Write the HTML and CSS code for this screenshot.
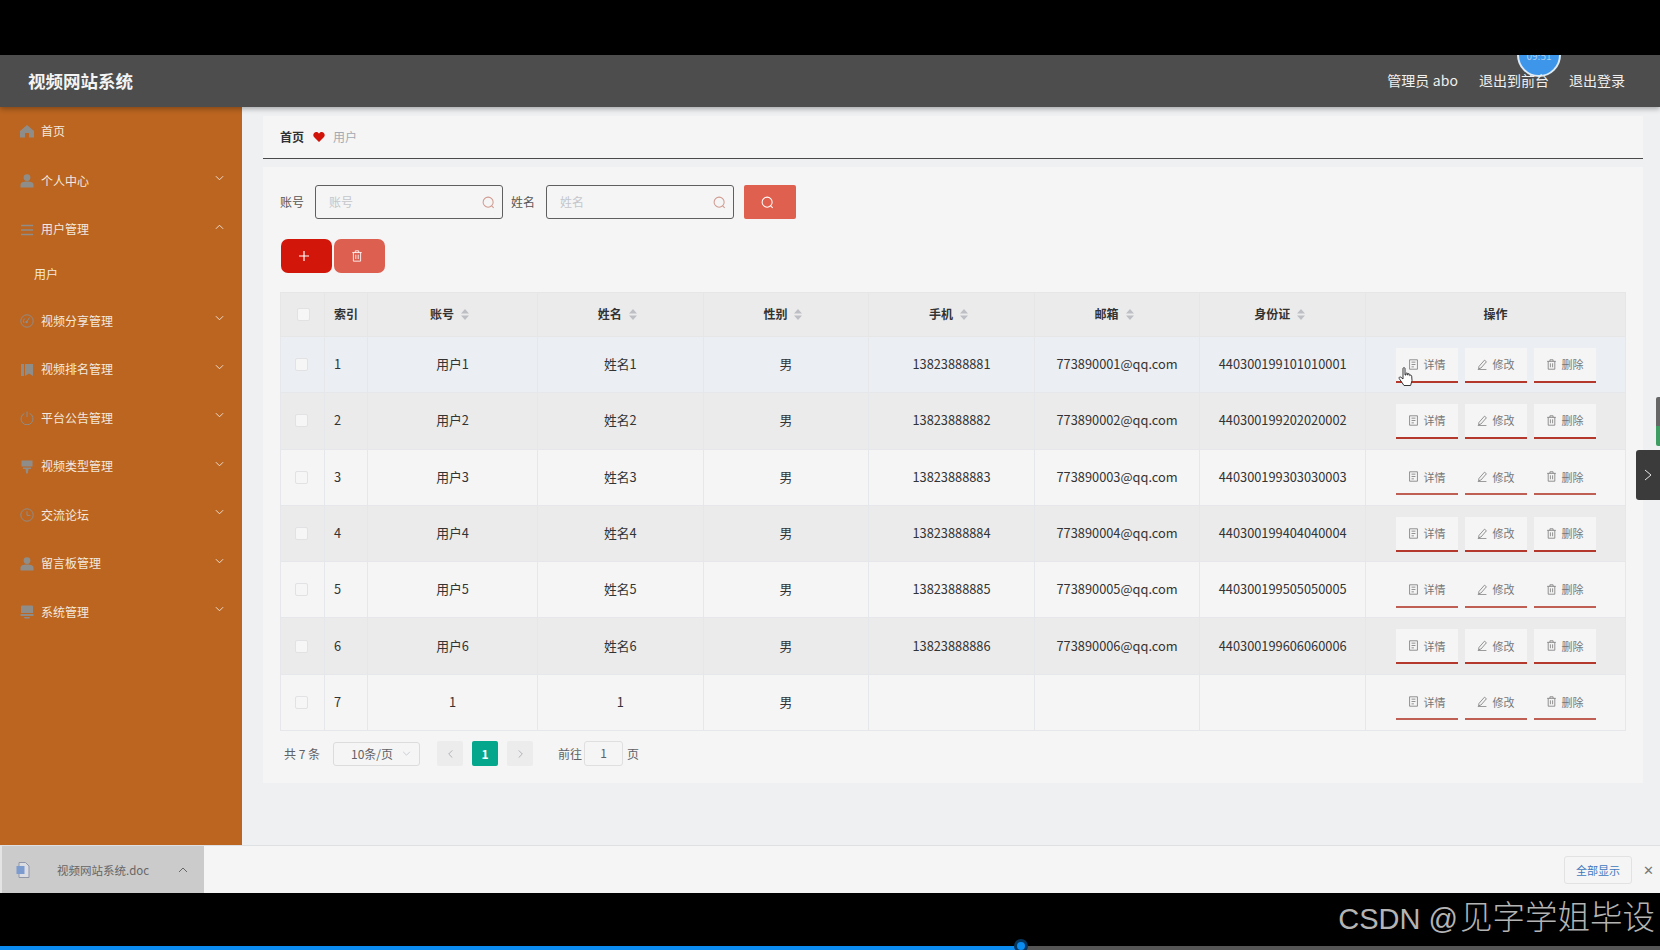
FILE: index.html
```html
<!DOCTYPE html>
<html lang="zh-CN">
<head>
  <meta charset="UTF-8" />
  <title>视频网站系统</title>
  <link rel="stylesheet" href="styles.css">
</head>
<body>
  <svg class="defs" width="0" height="0">
    <defs>
      <symbol id="i-home" viewBox="0 0 14 14"><path d="M7 1 L14 7 V13.5 H9 V9 H5 V13.5 H0 V7 Z" fill="currentColor"/></symbol>
      <symbol id="i-user" viewBox="0 0 14 14"><circle cx="7" cy="3.6" r="3.4" fill="currentColor"/><path d="M0.5 13.5 V11 C0.5 8.6 3 7.6 7 7.6 C11 7.6 13.5 8.6 13.5 11 V13.5 Z" fill="currentColor"/></symbol>
      <symbol id="i-list" viewBox="0 0 14 14"><path d="M1 2.5 H13 M1 7 H13 M1 11.5 H13" stroke="currentColor" stroke-width="1.6" fill="none"/></symbol>
      <symbol id="i-gauge" viewBox="0 0 14 14"><circle cx="7" cy="7" r="6.2" stroke="currentColor" fill="none"/><path d="M9.5 3.5 L7 7.5 M4 9 A3.4 3.4 0 0 1 4.6 4.6" stroke="currentColor" fill="none"/><circle cx="6.6" cy="8" r="1.2" fill="currentColor"/></symbol>
      <symbol id="i-book" viewBox="0 0 14 14"><path d="M1 1 H4 V13 H1 Z M5 1 H13 V13 L9 10.5 L5 13 Z" fill="currentColor"/></symbol>
      <symbol id="i-power" viewBox="0 0 14 14"><path d="M4.4 2.4 A6 6 0 1 0 9.6 2.4 M7 0.5 V6" stroke="currentColor" fill="none"/></symbol>
      <symbol id="i-brush" viewBox="0 0 14 14"><path d="M1.5 0.5 H12.5 V6.5 H1.5 Z M3 7.5 H11 V9 H8.5 L7.8 13.5 H6.2 L5.5 9 H3 Z" fill="currentColor"/></symbol>
      <symbol id="i-clock" viewBox="0 0 14 14"><circle cx="7" cy="7" r="6.2" stroke="currentColor" fill="none"/><path d="M7 3.4 V7.4 H10.4" stroke="currentColor" fill="none"/></symbol>
      <symbol id="i-system" viewBox="0 0 14 14"><path d="M2 0.5 H12 Q13 0.5 13 1.5 V8 H1 V1.5 Q1 0.5 2 0.5 Z M0.5 9 H13.5 V10.5 Q13.5 11 13 11 H1 Q0.5 11 0.5 10.5 Z M4 12 H10 L9.4 13.5 H4.6 Z" fill="currentColor"/></symbol>
      <symbol id="i-down" viewBox="0 0 10 6"><path d="M1 1 L5 5 L9 1" stroke="currentColor" fill="none"/></symbol>
      <symbol id="i-up" viewBox="0 0 10 6"><path d="M1 5 L5 1 L9 5" stroke="currentColor" fill="none"/></symbol>
      <symbol id="i-search" viewBox="0 0 14 14"><circle cx="6.6" cy="6.6" r="5.4" stroke="currentColor" fill="none" stroke-width="1.1"/><path d="M10.4 10.6 L12.6 12.8" stroke="currentColor" stroke-width="1.1"/></symbol>
      <symbol id="i-trash" viewBox="0 0 14 14"><path d="M1.5 3 H12.5 M5 3 V1 H9 V3 M2.8 3 V13 H11.2 V3 M5.6 5.5 V10.5 M8.4 5.5 V10.5" stroke="currentColor" fill="none"/></symbol>
      <symbol id="i-doc" viewBox="0 0 14 14"><path d="M2 1 H12 V13 H2 Z M4.5 4 H9.5 M4.5 7 H9.5 M4.5 10 H7.5" stroke="currentColor" fill="none"/></symbol>
      <symbol id="i-edit" viewBox="0 0 14 14"><path d="M9.5 1.5 L12 3.5 L5 11.5 L2 12.5 L2.5 9.5 Z M1 13.5 H12" stroke="currentColor" fill="none"/></symbol>
      <symbol id="i-sort" viewBox="0 0 8 11"><path d="M4 0 L8 4.5 H0 Z M4 11 L0 6.5 H8 Z" fill="currentColor"/></symbol>
    </defs>
  </svg>

  <div class="screen">
    <div class="black-top"></div>
    <header class="topbar">
      <div class="brand">视频网站系统</div>
      <div class="top-links">
        <span class="who">管理员 abo</span>
        <span>退出到前台</span>
        <span>退出登录</span>
      </div>
    </header>

    <div class="layout">
      <aside class="sidebar" id="sidebar"></aside>
      <main class="main">
        <div class="crumbs">
          <span class="crumb-home">首页</span>
          <svg class="heart" viewBox="0 0 14 12"><path d="M7 12 L1 6 C-1 3.5 0.8 0 3.8 0 C5.2 0 6.4 0.8 7 2 C7.6 0.8 8.8 0 10.2 0 C13.2 0 15 3.5 13 6 Z" fill="#d0140a"/></svg>
          <span class="crumb-now">用户</span>
        </div>

        <section class="panel">
          <div class="search-row">
            <label>账号</label>
            <div class="field"><span>账号</span><svg><use href="#i-search"/></svg></div>
            <label>姓名</label>
            <div class="field"><span>姓名</span><svg><use href="#i-search"/></svg></div>
            <button class="btn-search"><svg><use href="#i-search"/></svg></button>
          </div>

          <div class="tool-row">
            <button class="btn-add"><svg viewBox="0 0 12 12"><path d="M6 1 V11 M1 6 H11" stroke="#fff" stroke-width="1.2"/></svg></button>
            <button class="btn-del"><svg><use href="#i-trash"/></svg></button>
          </div>

          <table class="grid">
            <colgroup>
              <col class="c-check"><col class="c-index"><col class="c-account"><col class="c-text"><col class="c-text"><col class="c-text"><col class="c-text"><col class="c-text"><col class="c-action">
            </colgroup>
            <thead>
              <tr>
                <th class="cell-check"><span class="check head-check"></span></th>
                <th class="left">索引</th>
                <th>账号<svg class="sort"><use href="#i-sort"/></svg></th>
                <th>姓名<svg class="sort"><use href="#i-sort"/></svg></th>
                <th>性别<svg class="sort"><use href="#i-sort"/></svg></th>
                <th>手机<svg class="sort"><use href="#i-sort"/></svg></th>
                <th>邮箱<svg class="sort"><use href="#i-sort"/></svg></th>
                <th>身份证<svg class="sort"><use href="#i-sort"/></svg></th>
                <th>操作</th>
              </tr>
            </thead>
            <tbody id="rows"></tbody>
          </table>

          <div class="pager">
            <span class="total">共 7 条</span>
            <div class="size"><span>10条/页</span><svg><use href="#i-down"/></svg></div>
            <span class="page-btn prev"><svg><use href="#i-down"/></svg></span>
            <span class="page-btn current">1</span>
            <span class="page-btn next"><svg><use href="#i-down"/></svg></span>
            <span class="goto">前往</span>
            <span class="goto-input">1</span>
            <span class="goto-end">页</span>
          </div>
        </section>
      </main>
    </div>

    <div class="download-bar">
      <div class="download-tab">
        <svg class="doc-icon" viewBox="0 0 14 16"><path d="M3 0.5 H9.5 L13 4 V15.5 H3 Z" fill="#dcdde3" stroke="#8f97a8"/><rect x="0.5" y="4" width="8" height="8" fill="#7c9ccf"/></svg>
        <span class="doc-name">视频网站系统.doc</span>
        <svg class="doc-caret"><use href="#i-up"/></svg>
      </div>
      <div class="show-all">全部显示</div>
      <div class="close-bar">✕</div>
    </div>

    <div class="black-bottom">
      <div class="watermark"><span class="wm-latin">CSDN @</span>见字学姐毕设</div>
      <div class="progress"><div class="progress-done"></div><span class="progress-dot"></span></div>
    </div>

    <!-- things lying over the page -->
    <div class="clock-ball"><span>09:51</span></div>
    <div class="side-tab"><svg viewBox="0 0 8 12"><path d="M1 1 L7 6 L1 11" stroke="#e6e6e6" fill="none"/></svg></div>
    <div class="side-strip"></div>
    <svg class="cursor" viewBox="0 0 16 20"><path d="M5 1.5 C5 0.4 7 0.4 7 1.5 V8 L8 8 V6.6 C8 5.8 9.6 5.8 9.8 6.8 V8.2 V7.2 C9.9 6.4 11.6 6.5 11.7 7.6 V8.6 C12 7.9 13.6 8 13.7 9.2 L14 13.5 L12.6 18.5 H6 L1.2 11.5 C0.5 10.4 2 9.4 3 10.3 L5 12 Z" fill="#fff" stroke="#222" stroke-width="0.9"/></svg>
  </div>

  <script>
    const menu = [
      { name: '首页', icon: 'i-home', first: true, noArrow: true },
      { name: '个人中心', icon: 'i-user' },
      { name: '用户管理', icon: 'i-list', open: true },
      { name: '用户', sub: true },
      { name: '视频分享管理', icon: 'i-gauge' },
      { name: '视频排名管理', icon: 'i-book' },
      { name: '平台公告管理', icon: 'i-power' },
      { name: '视频类型管理', icon: 'i-brush' },
      { name: '交流论坛', icon: 'i-clock' },
      { name: '留言板管理', icon: 'i-user' },
      { name: '系统管理', icon: 'i-system' },
    ];

    const users = [
      { no: 1, account: '用户1', name: '姓名1', phone: '13823888881', mail: '773890001@qq.com', card: '440300199101010001' },
      { no: 2, account: '用户2', name: '姓名2', phone: '13823888882', mail: '773890002@qq.com', card: '440300199202020002' },
      { no: 3, account: '用户3', name: '姓名3', phone: '13823888883', mail: '773890003@qq.com', card: '440300199303030003' },
      { no: 4, account: '用户4', name: '姓名4', phone: '13823888884', mail: '773890004@qq.com', card: '440300199404040004' },
      { no: 5, account: '用户5', name: '姓名5', phone: '13823888885', mail: '773890005@qq.com', card: '440300199505050005' },
      { no: 6, account: '用户6', name: '姓名6', phone: '13823888886', mail: '773890006@qq.com', card: '440300199606060006' },
      { no: 7, account: '1', name: '1', phone: '', mail: '', card: '' },
    ];

    function renderMenu() {
      const box = document.getElementById('sidebar');
      for (const m of menu) {
        const div = document.createElement('div');
        div.className = m.sub ? 'menu-sub' : 'menu-item';
        if (m.first) div.classList.add('menu-first');
        if (m.sub) {
          div.textContent = m.name;
        } else {
          const arrow = m.noArrow ? '' : `<svg class="arrow"><use href="#${m.open ? 'i-up' : 'i-down'}"/></svg>`;
          div.innerHTML = `<svg class="menu-icon"><use href="#${m.icon}"/></svg><span>${m.name}</span>${arrow}`;
        }
        box.appendChild(div);
      }
    }

    function renderRows() {
      const body = document.getElementById('rows');
      for (const u of users) {
        const tr = document.createElement('tr');
        if (u.no === 1) tr.className = 'hover';
        tr.innerHTML = `
          <td class="cell-check"><span class="check"></span></td>
          <td class="left">${u.no}</td>
          <td>${u.account}</td>
          <td>${u.name}</td>
          <td>男</td>
          <td>${u.phone}</td>
          <td>${u.mail}</td>
          <td>${u.card}</td>
          <td class="actions">
            <span class="act"><svg><use href="#i-doc"/></svg>详情</span>
            <span class="act"><svg><use href="#i-edit"/></svg>修改</span>
            <span class="act"><svg><use href="#i-trash"/></svg>删除</span>
          </td>
        `;
        body.appendChild(tr);
      }
    }

    window.onload = () => {
      renderMenu();
      renderRows();
    };
  </script>
</body>
</html>
```

FILE: styles.css
```css
* {
  box-sizing: border-box;
}
body {
  margin: 0;
  background: #000;
  font-family: "Noto Sans CJK SC", "Liberation Sans", sans-serif;
  font-size: 12px;
  color: #333;
  overflow: hidden;
}
.defs {
  position: absolute;
}
.screen {
  position: relative;
  width: 1660px;
  height: 950px;
  overflow: hidden;
  display: flex;
  flex-direction: column;
}
.black-top {
  height: 55px;
  background: #000;
}

/* top bar */
.topbar {
  height: 52px;
  background: #4d4d4d;
  color: #f0f0f0;
  display: flex;
  justify-content: space-between;
  align-items: center;
  padding: 0 35px 2px 28px;
  box-shadow: 0 2px 5px rgba(0,0,0,0.3);
  position: relative;
}
.brand {
  font-size: 17.5px;
  font-weight: 700;
  color: #f4f4f4;
}
.top-links {
  display: flex;
  gap: 20px;
  font-size: 14px;
  position: relative;
  z-index: 2;
}
.who {
  margin-right: 1px;
  letter-spacing: 0.1px;
}

.layout {
  height: 738px;
  display: flex;
}

/* sidebar */
.sidebar {
  width: 242px;
  flex: none;
  background: #bb6520;
  color: #f3e9df;
}
.menu-item {
  height: 48.5px;
  display: flex;
  align-items: center;
  padding: 0 0 0 20px;
  position: relative;
}
.menu-item span {
  padding-bottom: 2px;
}
.menu-first {
  height: 50px;
  padding-bottom: 2px;
}
.menu-icon {
  width: 14px;
  height: 14px;
  color: #8f8d8a;
  margin-right: 7px;
}
.arrow {
  position: absolute;
  right: 18px;
  top: 18px;
  width: 9px;
  height: 6px;
  color: #f3e9df;
}
.menu-sub {
  height: 43px;
  padding: 11px 0 0 34px;
}

/* main area */
.main {
  flex: 1;
  background: #eff0f2;
  padding: 9px 17px 0 21px;
}
.crumbs {
  height: 43px;
  background: #f5f5f5;
  border-bottom: 1px solid #4a4a4a;
  display: flex;
  align-items: center;
  padding: 0 0 2px 17px;
}
.crumb-home {
  font-weight: 700;
  color: #303133;
}
.heart {
  width: 12px;
  height: 10px;
  margin: 2px 8px 0 9px;
}
.crumb-now {
  color: #a3a9b3;
}
.panel {
  margin-top: 8px;
  background: #f5f5f5;
  padding: 18px 17px 17px;
}
.search-row {
  display: flex;
  align-items: center;
  height: 34px;
}
.search-row label {
  width: 24px;
  margin-right: 11px;
  padding-bottom: 1px;
  color: #555;
}
.field {
  width: 188px;
  height: 34px;
  border: 1px solid #5f5f5f;
  border-radius: 3px;
  display: flex;
  justify-content: space-between;
  align-items: center;
  padding: 0 7px 0 13px;
  color: #c4c6cb;
  margin-right: 8px;
}
.field span {
  padding-bottom: 2px;
}
.field svg {
  width: 13px;
  height: 13px;
  color: #d09a90;
}
.btn-search {
  width: 52px;
  height: 34px;
  margin-left: 2px;
  border: none;
  border-radius: 2px;
  background: #e0604f;
  color: #fff;
  padding: 0 6px 0 0;
  display: flex;
  align-items: center;
  justify-content: center;
}
.btn-search svg {
  width: 13px;
  height: 13px;
}
.tool-row {
  display: flex;
  gap: 2px;
  margin: 20px 0 19px;
  height: 34px;
  padding-left: 1px;
}
.tool-row button {
  width: 51px;
  height: 34px;
  border: none;
  border-radius: 7px;
  padding: 0 5px 0 0;
  display: flex;
  align-items: center;
  justify-content: center;
}
.btn-add {
  background: #d2160a;
}
.btn-add svg {
  width: 12px;
  height: 12px;
}
.btn-del {
  background: #dd5f50;
  color: #fff;
}
.btn-del svg {
  width: 12px;
  height: 12px;
}

/* table */
.grid {
  width: 1345px;
  table-layout: fixed;
  border-collapse: collapse;
}
.c-check { width: 44px; }
.c-index { width: 43px; }
.c-account { width: 170px; }
.c-text { width: 165.6px; }
.c-action { width: 260px; }
.grid th, .grid td {
  border: 1px solid #e6e7eb;
  text-align: center;
  padding: 0 0 2px;
  color: #333;
}
.grid th {
  height: 44px;
  background: #ebebeb;
  font-weight: 700;
  border-color: #e6e6e6;
}
.grid td {
  height: 56.3px;
  background: #f5f5f5;
  font-size: 12.8px;
}
.grid tbody tr:nth-child(even) td {
  background: #ebebeb;
}
.grid tbody tr.hover td {
  background: #ebeef3;
}
.grid .left {
  text-align: left;
  padding-left: 9px;
}
.sort {
  display: inline-block;
  width: 8px;
  height: 11px;
  margin: 0 6px 0 7px;
  vertical-align: -1px;
  color: #bdbfc5;
}
.grid .cell-check {
  padding: 0;
}
.check {
  display: block;
  width: 13px;
  height: 13px;
  margin: 0 0 0 14px;
  border: 1px solid #e2e2e4;
  border-radius: 2px;
  background: #f6f6f6;
}
.head-check {
  margin-left: 16px;
}
.grid td.actions {
  text-align: left;
  padding: 1px 0 0 30px;
  font-size: 0;
}
.act {
  display: inline-flex;
  align-items: center;
  justify-content: center;
  width: 62px;
  height: 35px;
  margin: 0 7px 0 0;
  background: #f5f5f5;
  border-bottom: 2px solid #b4392c;
  color: #777;
  font-size: 11px;
}
.act svg {
  width: 11px;
  height: 11px;
  margin-right: 4px;
  color: #777;
}
tr:nth-child(3) .act, tr:nth-child(5) .act, tr:nth-child(7) .act {
  border-bottom-color: #bf5e52;
}

/* pager */
.pager {
  display: flex;
  align-items: center;
  height: 25px;
  margin-top: 10px;
  padding-left: 4px;
  color: #606266;
}
.total {
  width: 49px;
  padding-bottom: 1px;
}
.size {
  width: 87px;
  height: 24px;
  border: 1px solid #dcdcdc;
  border-radius: 3px;
  display: flex;
  align-items: center;
  justify-content: space-between;
  padding: 0 8px 0 17px;
  margin-right: 17px;
}
.size span {
  padding-bottom: 1px;
}
.size svg {
  width: 9px;
  height: 5px;
  color: #c0c4cc;
}
.page-btn {
  width: 26px;
  height: 25px;
  background: #ececec;
  border-radius: 2px;
  display: flex;
  align-items: center;
  justify-content: center;
  margin-right: 9px;
  color: #a9acb3;
}
.page-btn svg {
  width: 9px;
  height: 6px;
}
.prev svg {
  transform: rotate(90deg);
}
.next svg {
  transform: rotate(-90deg);
}
.page-btn.current {
  background: #04a78c;
  color: #fff;
  font-weight: 700;
}
.goto {
  margin-left: 16px;
  margin-right: 2px;
  padding-bottom: 1px;
}
.goto-input {
  width: 39px;
  height: 25px;
  border: 1px solid #dfdfdf;
  border-radius: 3px;
  text-align: center;
  line-height: 21px;
  margin-right: 4px;
}
.goto-end {
  padding-bottom: 1px;
}

/* download bar */
.download-bar {
  height: 48px;
  background: #f5f5f5;
  border-top: 1px solid #dfe0e2;
  display: flex;
  align-items: center;
}
.download-tab {
  width: 204px;
  height: 47px;
  background: #cbcbcb;
  border-left: 2px solid #e4e4e4;
  display: flex;
  align-items: center;
  padding-left: 14px;
  color: #666;
}
.doc-icon {
  width: 14px;
  height: 16px;
  margin-right: 27px;
}
.doc-name {
  width: 121px;
  font-size: 11.5px;
  white-space: nowrap;
}
.doc-caret {
  width: 10px;
  height: 6px;
  color: #666;
}
.show-all {
  width: 68px;
  height: 28px;
  margin-left: auto;
  border: 1px solid #e2e2e2;
  border-radius: 3px;
  color: #3e78bd;
  font-size: 11px;
  text-align: center;
  line-height: 26px;
}
.close-bar {
  width: 28px;
  padding-left: 4px;
  text-align: center;
  font-size: 13px;
  color: #777;
}

/* bottom black strip */
.black-bottom {
  flex: 1;
  background: #000;
  position: relative;
}
.watermark {
  position: absolute;
  right: 5px;
  top: 2px;
  font-family: "Liberation Sans", "Noto Sans CJK SC", sans-serif;
  font-size: 32.5px;
  font-weight: 300;
  line-height: 46px;
  color: #b4b4b4;
  white-space: nowrap;
}
.wm-latin {
  font-size: 29px;
  margin-right: 2px;
}
.progress {
  position: absolute;
  left: 0;
  right: 0;
  bottom: 0;
  height: 4px;
  background: #555;
}
.progress-done {
  width: 1021px;
  height: 4px;
  background: #0a8cf0;
}
.progress-dot {
  position: absolute;
  left: 1014px;
  top: -7px;
  width: 14px;
  height: 14px;
  border-radius: 50%;
  background: #0a8cf0;
  border: 3px solid #06365e;
}

/* overlays */
.clock-ball {
  position: absolute;
  left: 1517px;
  top: 33px;
  width: 44px;
  height: 44px;
  border-radius: 50%;
  background: #3d96ea;
  border: 2px solid #dceaf6;
  color: #a9d0f3;
  font-size: 10px;
  line-height: 14px;
  text-align: center;
  padding-top: 14px;
  clip-path: inset(22px 0 0 0);
}
.side-tab {
  position: absolute;
  left: 1636px;
  top: 450px;
  width: 24px;
  height: 50px;
  background: #3b3b3b;
  border-radius: 3px 0 0 3px;
  display: flex;
  align-items: center;
  justify-content: center;
}
.side-tab svg {
  width: 8px;
  height: 12px;
}
.side-strip {
  position: absolute;
  left: 1656px;
  top: 397px;
  width: 4px;
  height: 49px;
  border-radius: 2px 0 0 2px;
  background: linear-gradient(#666 0 60%, #3f9c62 60%);
}
.cursor {
  position: absolute;
  left: 1398px;
  top: 367px;
  width: 16px;
  height: 20px;
}
```
